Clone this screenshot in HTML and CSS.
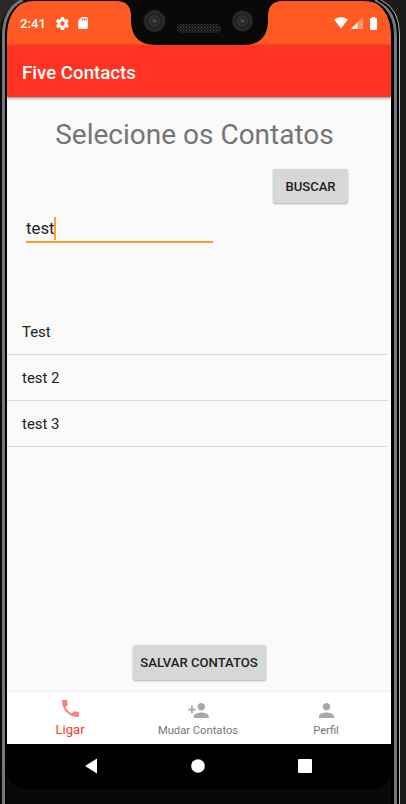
FILE: index.html
```html
<!DOCTYPE html>
<html lang="pt-BR">
<head>
<meta charset="utf-8">
<title>Five Contacts</title>
<link rel="stylesheet" href="styles.css">
</head>
<body>
<div class="phone">
  <div class="screen">
    <header class="status">
      <span class="clock">2:41</span>
      <svg class="gear" viewBox="2 2 20 20"><path d="M19.4 13a7.500 7.500 0 0 0 0-2l2.100-1.600a.5.5 0 0 0 .1-.7l-2-3.400a.5.5 0 0 0-.6-.2l-2.500 1a7.300 7.300 0 0 0-1.700-1l-.4-2.700a.5.5 0 0 0-.5-.4h-4a.5.5 0 0 0-.5.4L9 5.100a7.300 7.300 0 0 0-1.700 1l-2.500-1a.5.5 0 0 0-.6.2l-2 3.400a.5.5 0 0 0 .1.700L4.500 11a7.500 7.500 0 0 0 0 2l-2.100 1.600a.5.5 0 0 0-.1.700l2 3.400c.1.200.4.300.6.200l2.500-1c.5.400 1.100.700 1.700 1l.4 2.700c0 .2.200.4.5.4h4c.200 0 .4-.2.500-.4l.4-2.700a7.300 7.300 0 0 0 1.700-1l2.500 1c.2.100.5 0 .6-.2l2-3.400a.5.5 0 0 0-.1-.7zM12 15.500a3.500 3.500 0 1 1 0-7 3.500 3.500 0 0 1 0 7z"/></svg>
      <svg class="sd" viewBox="4 2 16 20"><path d="M18 2h-8L4 8v12a2 2 0 0 0 2 2h12a2 2 0 0 0 2-2V4a2 2 0 0 0-2-2zm-6 6h-2V4h2zm3 0h-2V4h2zm3 0h-2V4h2z"/></svg>
      <svg class="wifi" viewBox="0 0 14 12"><path d="M0 2.500Q7-2 14 2.500L7 11.500Z"/></svg>
      <svg class="signal" viewBox="0 0 12 12"><path opacity=".35" d="M0 12L12 0V12Z"/><path d="M0 12L6.500 5.500V12Z"/></svg>
      <svg class="battery" viewBox="0 0 7 13"><path d="M2 0h3v1h1q1 0 1 1v10q0 1-1 1H1q-1 0-1-1V2q0-1 1-1h1z"/></svg>
    </header>
    <h1 class="appbar">Five Contacts</h1>
    <main>
      <h2>Selecione os Contatos</h2>
      <button class="btn search">BUSCAR</button>
      <div class="field"><span>test</span><i class="caret"></i></div>
      <ul class="list"><li>Test</li><li>test 2</li><li>test 3</li></ul>
      <button class="btn save">SALVAR CONTATOS</button>
    </main>
    <nav class="tabs">
      <a class="tab active"><svg viewBox="3 3 18 18"><path d="M6.620 10.790c1.440 2.830 3.760 5.140 6.590 6.590l2.200-2.200c.27-.27.67-.36 1.020-.24 1.120.37 2.330.57 3.570.57.55 0 1 .45 1 1V20c0 .55-.45 1-1 1-9.390 0-17-7.610-17-17 0-.55.45-1 1-1h3.500c.55 0 1 .45 1 1 0 1.250.2 2.450.57 3.570.11.35.03.74-.25 1.020z"/></svg><span>Ligar</span></a>
      <a class="tab wide"><svg viewBox="1 4 22 16"><path d="M15 12c2.210 0 4-1.790 4-4s-1.790-4-4-4-4 1.790-4 4 1.790 4 4 4zm-9-2V7H4v3H1v2h3v3h2v-3h3v-2zm9 4c-2.670 0-8 1.340-8 4v2h16v-2c0-2.660-5.330-4-8-4z"/></svg><span>Mudar Contatos</span></a>
      <a class="tab"><svg viewBox="4 4 16 16"><path d="M12 12c2.210 0 4-1.790 4-4s-1.790-4-4-4-4 1.790-4 4 1.790 4 4 4zm0 2c-2.670 0-8 1.340-8 4v2h16v-2c0-2.660-5.330-4-8-4z"/></svg><span>Perfil</span></a>
    </nav>
    <div class="system">
      <svg viewBox="0 0 13 16"><path d="M12.500.5v15L.5 8z"/></svg>
      <svg viewBox="0 0 14 14"><circle cx="7" cy="7" r="6.800"/></svg>
      <svg viewBox="0 0 14 14"><rect width="14" height="14" rx="1"/></svg>
    </div>
  </div>
  <svg class="frame" viewBox="0 0 406 804">
    <defs>
      <pattern id="mesh" width="3" height="3" patternUnits="userSpaceOnUse"><rect width="3" height="3" fill="#161616"/><rect width="1" height="1" fill="#484848"/><rect x="1.500" y="1.500" width="1" height="1" fill="#3c3c3c"/></pattern>
      <radialGradient id="lens"><stop offset="0" stop-color="#625d59"/><stop offset=".25" stop-color="#24282b"/><stop offset=".5" stop-color="#303434"/><stop offset=".62" stop-color="#1b1a18"/><stop offset=".72" stop-color="#2d2924"/><stop offset="1" stop-color="#28241e"/></radialGradient>
    </defs>
    <path fill="#090909" fill-rule="evenodd" d="M0 0H406V804H0ZM7 32V767Q7 789 29 789H369Q391 789 391 767V32Q391 1 363 1H283Q268 1 268 16V20Q268 45 243 45H156Q131 45 131 20V16Q131 1 116 1H35Q7 1 7 32Z"/>
    <path fill="#191a19" d="M375 0H406V804H400V34Q399 10 375 0Z"/>
    <path fill="#292929" d="M0 0H23Q0 9 0 36Z"/>
    <path class="line black" d="M6 804V36Q6 10 25 0M392 804V36Q392 10 373 0"/>
    <path class="line metal" d="M3.500 804V36Q3.500 9 23 0M395.500 804V36Q395.500 9 375 0"/>
    <path class="line black" d="M398 804V34Q398 9 378 0"/>
    <path class="line edge" d="M399.500 804V34Q399.500 9 381 0"/>
    <circle cx="154.500" cy="21" r="11" fill="url(#lens)"/>
    <circle cx="242.500" cy="21" r="10.500" fill="url(#lens)"/>
    <rect x="177" y="24" width="44" height="9" rx="4.500" fill="url(#mesh)"/>
  </svg>
</div>
</body>
</html>
```
FILE: styles.css
```css
* { box-sizing: border-box; }
body { margin: 0; background: #090909; font-family: Roboto, sans-serif; color: #212121; overflow: hidden; }
svg { display: block; fill: currentColor; }
.phone { position: relative; width: 406px; height: 804px; padding: 1px 15px 15px 7px; }
.screen { width: 384px; height: 788px; display: flex; flex-direction: column; background: #fafafa; }
.status { height: 44px; flex: none; display: flex; align-items: center; padding: 0 14px 0 13px; background: #ff5a24; color: #fff; }
.clock { width: 36px; font-size: 13.2px; font-weight: 500; }
.gear { width: 13px; height: 13px; }
.sd { width: 10px; height: 12px; margin-left: 9px; }
.wifi { width: 14px; height: 12px; margin-left: auto; }
.signal { width: 12px; height: 12px; margin-left: 3px; }
.battery { width: 7px; height: 13px; margin-left: 7px; }
.appbar { height: 52px; flex: none; margin: 0; padding-left: 15px; background: #ff3223; color: #fff; font-size: 18.7px; font-weight: 500; line-height: 56px; box-shadow: 0 1px 3px rgba(0,0,0,.5); }
main { flex: 1; display: flex; flex-direction: column; }
h2 { margin: 21px 0 0 -9px; text-align: center; font-size: 28px; line-height: 34px; font-weight: 400; color: #757575; white-space: nowrap; }
.btn { border: 0; border-radius: 2px; background: #d6d8d7; color: #212121; font: 500 13.1px Roboto, sans-serif; padding: 0; box-shadow: 0 1px 2px rgba(0,0,0,.3); white-space: nowrap; }
.search { width: 75px; height: 34px; margin: 17px 0 0 266px; }
.field { display: flex; align-items: center; width: 187px; height: 28px; margin: 12px 0 0 19px; border-bottom: 2px solid #ff9c20; font-size: 16.8px; }
.caret { width: 2px; height: 23px; margin-left: -1px; background: #ffa02c; }
.list { list-style: none; width: 381px; margin: 66px 0 0; padding: 0; font-size: 14.95px; }
.list li { height: 46px; padding-left: 15px; border-bottom: 1px solid #d9d9d9; line-height: 47px; }
.save { width: 133px; height: 35px; margin: auto auto 11px 125.5px; }
.tabs { height: 53px; flex: none; display: grid; grid-template-columns: repeat(3, 128px); margin-left: -1px; padding-left: 0; background: #fff; border-top: 1px solid #f2f2f2; }
.tab { display: flex; flex-direction: column; align-items: center; padding-top: 11px; color: #777; font-size: 11.2px; line-height: 14px; }
.tab svg { width: 15px; height: 15px; color: #a8a8a8; margin-bottom: 6px; }
.tab.wide svg { width: 21px; }
.tab.active { color: #ff3223; font-size: 13.1px; padding-top: 8px; }
.tab.active svg { width: 17px; height: 17px; color: #ff8078; }
.system { height: 45px; flex: none; display: flex; align-items: center; padding: 0 0 1px 77px; background: #000; color: #fff; }
.system svg { height: 14px; width: 14px; }
.system svg:first-child { width: 14px; height: 16px; margin-right: 93px; }
.system svg:last-child { margin-left: 93px; }
.frame { position: absolute; inset: 0; width: 406px; height: 804px; pointer-events: none; }
.line { fill: none; }
.black { stroke: #000; stroke-width: 2; }
.metal { stroke: #77777b; stroke-width: 3; }
.edge { stroke: #b5b5b9; stroke-width: 1; }
```
